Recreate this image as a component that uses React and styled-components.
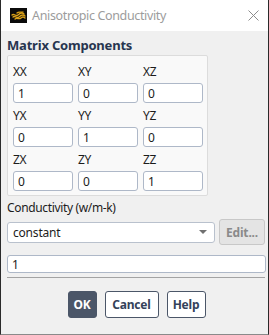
import React from "react";
import styled, { createGlobalStyle } from "styled-components";

const GlobalStyle = createGlobalStyle`
  html, body {
    margin: 0;
    padding: 0;
    background: #ffffff;
  }
  body {
    font-family: "Noto Sans", "Open Sans", sans-serif;
  }
`;

const Window = styled.div`
  width: 269px;
  height: 335px;
  box-sizing: border-box;
  border-left: 1px solid #2a2a2a;
  border-right: 1px solid #2a2a2a;
  border-bottom: 1px solid #8a8a8a;
  display: flex;
  flex-direction: column;
  background: #f0f0f0;
  overflow: hidden;
`;

const TitleBar = styled.div`
  height: 31px;
  flex: none;
  background: #ffffff;
  display: flex;
  align-items: center;
  padding: 0 9px 0 9px;
`;

const TitleText = styled.span`
  margin-left: 5px;
  font-size: 12.5px;
  letter-spacing: -0.35px;
  color: #9c9c9c;
  flex: 1;
  white-space: nowrap;
`;

const Body = styled.div`
  flex: 1;
  display: flex;
  flex-direction: column;
  padding: 6px 2px 0 6px;
`;

const Heading = styled.div`
  font-size: 13px;
  line-height: 16px;
  font-weight: bold;
  letter-spacing: -0.2px;
  color: #27354f;
`;

const Group = styled.div`
  margin-top: 2px;
  width: 201px;
  box-sizing: border-box;
  border: 1px solid #dcdcdc;
  border-radius: 2px;
  background: #f9f9f9;
  padding: 8px 5px 4px 5px;
  display: grid;
  grid-template-columns: repeat(3, 60px);
  column-gap: 5px;
  row-gap: 5px;
`;

const Cell = styled.div`
  display: flex;
  flex-direction: column;
  gap: 3px;
`;

const Label = styled.div`
  font-size: 12px;
  line-height: 16px;
  letter-spacing: -0.35px;
  color: #1c1c1c;
  margin-top: ${(p) => p.$top || 0}px;
`;

const TextField = styled.input`
  display: block;
  box-sizing: border-box;
  width: ${(p) => p.$width || "100%"};
  height: ${(p) => p.$height || 20}px;
  margin: 0;
  border: 1px solid #aeb8c8;
  border-radius: 3px;
  background: #ffffff;
  padding: 0 4px;
  font-family: inherit;
  font-size: 12px;
  color: #1c1c1c;
  outline: none;
`;

const Row = styled.div`
  margin-top: 3px;
  display: flex;
  align-items: center;
  gap: 4px;
`;

const Select = styled.div`
  box-sizing: border-box;
  width: 208px;
  height: 21px;
  border: 1px solid #b9c1cd;
  border-radius: 3px;
  background: #ffffff;
  display: flex;
  align-items: center;
  padding: 0 7px 0 5px;
  font-size: 12px;
  letter-spacing: -0.2px;
  color: #1c1c1c;
`;

const SelectText = styled.span`
  flex: 1;
`;

const Caret = styled.span`
  width: 0;
  height: 0;
  border-left: 4px solid transparent;
  border-right: 4px solid transparent;
  border-top: 4px solid #707070;
`;

const EditButton = styled.div`
  box-sizing: border-box;
  width: 46px;
  height: 26px;
  border: 1px solid #c8c8c8;
  border-radius: 3px;
  background: #e4e4e4;
  display: flex;
  align-items: center;
  justify-content: center;
  font-size: 12px;
  font-weight: bold;
  letter-spacing: -0.2px;
  color: #8a8a8a;
`;

const ValueRow = styled.div`
  margin-top: 10px;
`;

const Separator = styled.div`
  margin: 4px 1px 0 0;
  height: 1px;
  background: #a3a3a3;
`;

const ButtonBar = styled.div`
  margin-top: 13px;
  display: flex;
  justify-content: center;
  gap: 8px;
`;

const Button = styled.div`
  box-sizing: border-box;
  width: ${(p) => p.$width}px;
  height: 27px;
  border: 1px solid #4b5668;
  border-radius: 3px;
  background: ${(p) => (p.$primary ? "#4b5668" : "#ffffff")};
  color: ${(p) => (p.$primary ? "#ffffff" : "#34425a")};
  display: flex;
  align-items: center;
  justify-content: center;
  font-size: 12px;
  font-weight: bold;
  letter-spacing: -0.2px;
`;

const CloseIcon = () => (
  <svg width="11" height="11" viewBox="0 0 11 11">
    <path d="M0.5 0.5 L10.5 10.5 M10.5 0.5 L0.5 10.5" stroke="#8c8c8c" strokeWidth="1" />
  </svg>
);

const Logo = () => (
  <svg width="17" height="15" viewBox="0 0 17 15">
    <rect width="17" height="15" fill="#0b0b0b" />
    <g fill="none" stroke="#d9a019" strokeWidth="1.3" strokeLinecap="round">
      <path d="M2 7 C4 5, 6 9, 8 7 S12 4, 14 6" />
      <path d="M3 9 C5 7, 7 11, 9 9 S13 6, 15 8" />
      <path d="M5 11 C7 9, 9 12, 11 10 S14 9, 15 10" />
      <path d="M7 5 C9 3, 11 5, 13 4" />
    </g>
  </svg>
);

const matrix = [
  ["XX", "1"], ["XY", "0"], ["XZ", "0"],
  ["YX", "0"], ["YY", "1"], ["YZ", "0"],
  ["ZX", "0"], ["ZY", "0"], ["ZZ", "1"],
];

export default function App() {
  return (
    <>
      <GlobalStyle />
      <Window>
        <TitleBar>
          <Logo />
          <TitleText>Anisotropic Conductivity</TitleText>
          <CloseIcon />
        </TitleBar>
        <Body>
          <Heading>Matrix Components</Heading>
          <Group>
            {matrix.map(([name, value]) => (
              <Cell key={name}>
                <Label>{name}</Label>
                <TextField defaultValue={value} />
              </Cell>
            ))}
          </Group>
          <Label $top={4}>Conductivity (w/m-k)</Label>
          <Row>
            <Select>
              <SelectText>constant</SelectText>
              <Caret />
            </Select>
            <EditButton>Edit...</EditButton>
          </Row>
          <ValueRow>
            <TextField defaultValue="1" $width="259px" $height={18} />
          </ValueRow>
          <Separator />
          <ButtonBar>
            <Button $primary $width={29}>OK</Button>
            <Button $width={54}>Cancel</Button>
            <Button $width={39}>Help</Button>
          </ButtonBar>
        </Body>
      </Window>
    </>
  );
}
